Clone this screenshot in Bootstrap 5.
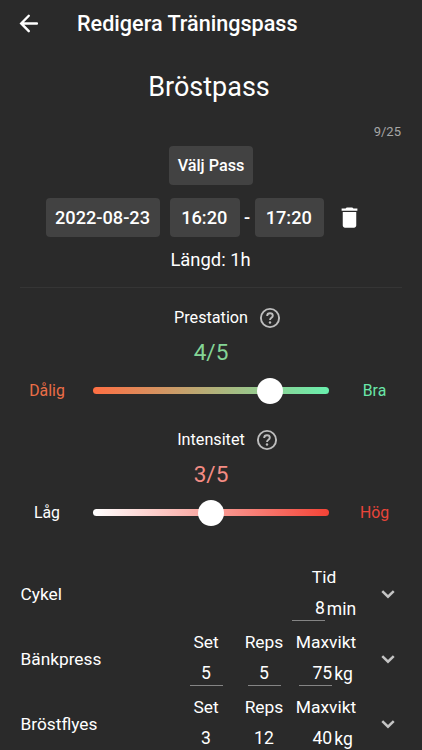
<!DOCTYPE html>
<html lang="sv" data-bs-theme="dark">
<head>
<meta charset="utf-8">
<meta name="viewport" content="width=device-width, initial-scale=1">
<title>Redigera Träningspass</title>
<link href="https://cdn.jsdelivr.net/npm/bootstrap@5.3.0/dist/css/bootstrap.min.css" rel="stylesheet">
<style>
body{background:#2a2a2a;color:#fff;font-family:Roboto,sans-serif;height:750px;overflow:hidden;font-size:18px;line-height:1.2}
svg{display:block;flex:none}
.topbar{height:47px;padding-left:16px;gap:35px}
.topbar h1{font-size:21.6px;font-weight:500;padding-top:1px}
.pass-name{height:79px;font-size:27px;line-height:80px;padding-right:4px}
.counter{height:20px;font-size:13px;line-height:12px;color:#a6a6a6;padding-right:21px}
.chip{--bs-btn-color:#fff;--bs-btn-bg:#424242;--bs-btn-border-width:0;--bs-btn-border-radius:4px;--bs-btn-padding-x:0;--bs-btn-padding-y:0;--bs-btn-font-weight:500;height:39px;line-height:39px;font-size:18.2px}
.chip-pass{width:84px;font-size:16.2px}
.chip-date{width:114px;margin-right:10px;padding-right:1px}
.chip-time{width:69.5px;padding-right:1px}
.date-row{margin-top:13px;padding-left:46px}
.dash{width:15px;font-weight:500}
.trash{margin-left:12px}
.duration{font-size:18.4px;height:50px;line-height:46px;padding-right:1px}
.rule{height:1px;background:#353535;margin:0 20px}
.rating{height:122px}
.rating-title{font-size:16.2px;height:60px;padding-left:34px;gap:10px}
.rating-title span{padding-bottom:1px}
.score{font-size:22.6px;height:29px;line-height:9px}
.slider-row{height:27px}
.end{font-size:15.8px;width:93px;padding-top:1px}
.end-low{padding-left:1px}
.end-high{padding-right:2px}
.track{width:236px;height:7px;border-radius:4px;position:relative}
.good{background:linear-gradient(90deg,#ff6f43,#69f0ae)}
.hard{background:linear-gradient(90deg,#fff,#f44336)}
.thumb{position:absolute;top:50%;width:26px;height:26px;border-radius:50%;background:#fff;transform:translate(-50%,-50%)}
.exercises{margin-top:29px}
.exercise{height:65px;padding-left:20.5px}
.exercise-name{width:156.5px;font-size:17.3px;padding-top:2px}
.cell{width:58px;height:65px;text-align:center}
.cell-wide{width:66px}
.cell-label{height:32px;line-height:32px;font-size:17.4px}
.value{width:33px;height:28px;line-height:31px;border-bottom:1px solid #858585;font-size:17.6px}
.unit{line-height:32px;height:27px;padding-left:2px;font-size:17.5px}
.chevron{margin-left:16px}
</style>
</head>
<body>
<svg class="d-none">
  <symbol id="help" viewBox="0 0 24 24"><circle cx="12" cy="12" r="9.1" fill="none" stroke="#bdbdbd" stroke-width="1.9"/><path d="M9.2 10V9.8C9.2 8.2 10.4 7.3 12 7.3s2.8.9 2.8 2.4c0 2.1-2.8 2-2.8 4.3" fill="none" stroke="#bdbdbd" stroke-width="1.9"/><circle cx="12" cy="16.5" r="1.2" fill="#bdbdbd"/></symbol>
  <symbol id="expand" viewBox="0 0 24 24"><path d="m6.7 9.3 5.300 5.200 5.300-5.200" fill="none" stroke="#c4c4c4" stroke-width="2.3"/></symbol>
</svg>
<header class="topbar d-flex align-items-center">
  <svg width="26" height="26" viewBox="0 0 24 24" fill="none" stroke="#fff" stroke-width="2.2" stroke-linecap="round"><path d="M19.300 11.500H5M11.800 4.400 4.800 11.500l7 7.100"/></svg>
  <h1 class="m-0">Redigera Träningspass</h1>
</header>
<main>
  <div class="pass-name text-center">Bröstpass</div>
  <div class="counter text-end">9/25</div>
  <div class="d-flex justify-content-center"><button class="btn chip chip-pass">Välj Pass</button></div>
  <div class="date-row d-flex align-items-center">
    <button class="btn chip chip-date">2022-08-23</button>
    <button class="btn chip chip-time">16:20</button>
    <span class="dash text-center">-</span>
    <button class="btn chip chip-time">17:20</button>
    <svg class="trash" width="27" height="27" viewBox="0 0 24 24" fill="#fff"><path d="M6 19c0 1.100.9 2 2 2h8c1.100 0 2-.9 2-2V7H6v12zM19 4h-3.500l-1-1h-5l-1 1H5v2h14V4z"/></svg>
  </div>
  <div class="duration text-center">Längd: 1h</div>
  <div class="rule"></div>

  <section class="rating">
    <div class="rating-title d-flex align-items-center justify-content-center"><span>Prestation</span>
      <svg width="24" height="24"><use href="#help"/></svg>
    </div>
    <div class="score text-center" style="color:#84d596">4/5</div>
    <div class="slider-row d-flex align-items-center">
      <div class="end end-low text-center" style="color:#ec6e47">Dålig</div>
      <div class="track good"><div class="thumb" style="left:75%"></div></div>
      <div class="end end-high text-center" style="color:#69e5a8">Bra</div>
    </div>
  </section>
  <section class="rating">
    <div class="rating-title d-flex align-items-center justify-content-center"><span>Intensitet</span>
      <svg width="24" height="24"><use href="#help"/></svg>
    </div>
    <div class="score text-center" style="color:#f48c84">3/5</div>
    <div class="slider-row d-flex align-items-center">
      <div class="end end-low text-center">Låg</div>
      <div class="track hard"><div class="thumb" style="left:50%"></div></div>
      <div class="end end-high text-center" style="color:#e8453a">Hög</div>
    </div>
  </section>

  <section class="exercises">
    <div class="exercise d-flex align-items-center">
      <div class="exercise-name">Cykel</div>
      <div class="cell"></div><div class="cell"></div>
      <div class="cell cell-wide">
        <div class="cell-label pe-1">Tid</div>
        <div class="d-flex justify-content-center pe-1"><div class="value text-end flex-shrink-0">8</div><div class="unit">min</div></div>
      </div>
      <svg class="chevron" width="26" height="26"><use href="#expand"/></svg>
    </div>
    <div class="exercise d-flex align-items-center">
      <div class="exercise-name">Bänkpress</div>
      <div class="cell"><div class="cell-label">Set</div><div class="value mx-auto">5</div></div>
      <div class="cell"><div class="cell-label">Reps</div><div class="value mx-auto">5</div></div>
      <div class="cell cell-wide"><div class="cell-label">Maxvikt</div>
        <div class="d-flex justify-content-center"><div class="value text-end">75</div><div class="unit">kg</div></div></div>
      <svg class="chevron" width="26" height="26"><use href="#expand"/></svg>
    </div>
    <div class="exercise d-flex align-items-center">
      <div class="exercise-name">Bröstflyes</div>
      <div class="cell"><div class="cell-label">Set</div><div class="value mx-auto">3</div></div>
      <div class="cell"><div class="cell-label">Reps</div><div class="value mx-auto">12</div></div>
      <div class="cell cell-wide"><div class="cell-label">Maxvikt</div>
        <div class="d-flex justify-content-center"><div class="value text-end">40</div><div class="unit">kg</div></div></div>
      <svg class="chevron" width="26" height="26"><use href="#expand"/></svg>
    </div>
  </section>
</main>
<script src="https://cdn.jsdelivr.net/npm/bootstrap@5.3.0/dist/js/bootstrap.bundle.min.js"></script>
</body>
</html>
